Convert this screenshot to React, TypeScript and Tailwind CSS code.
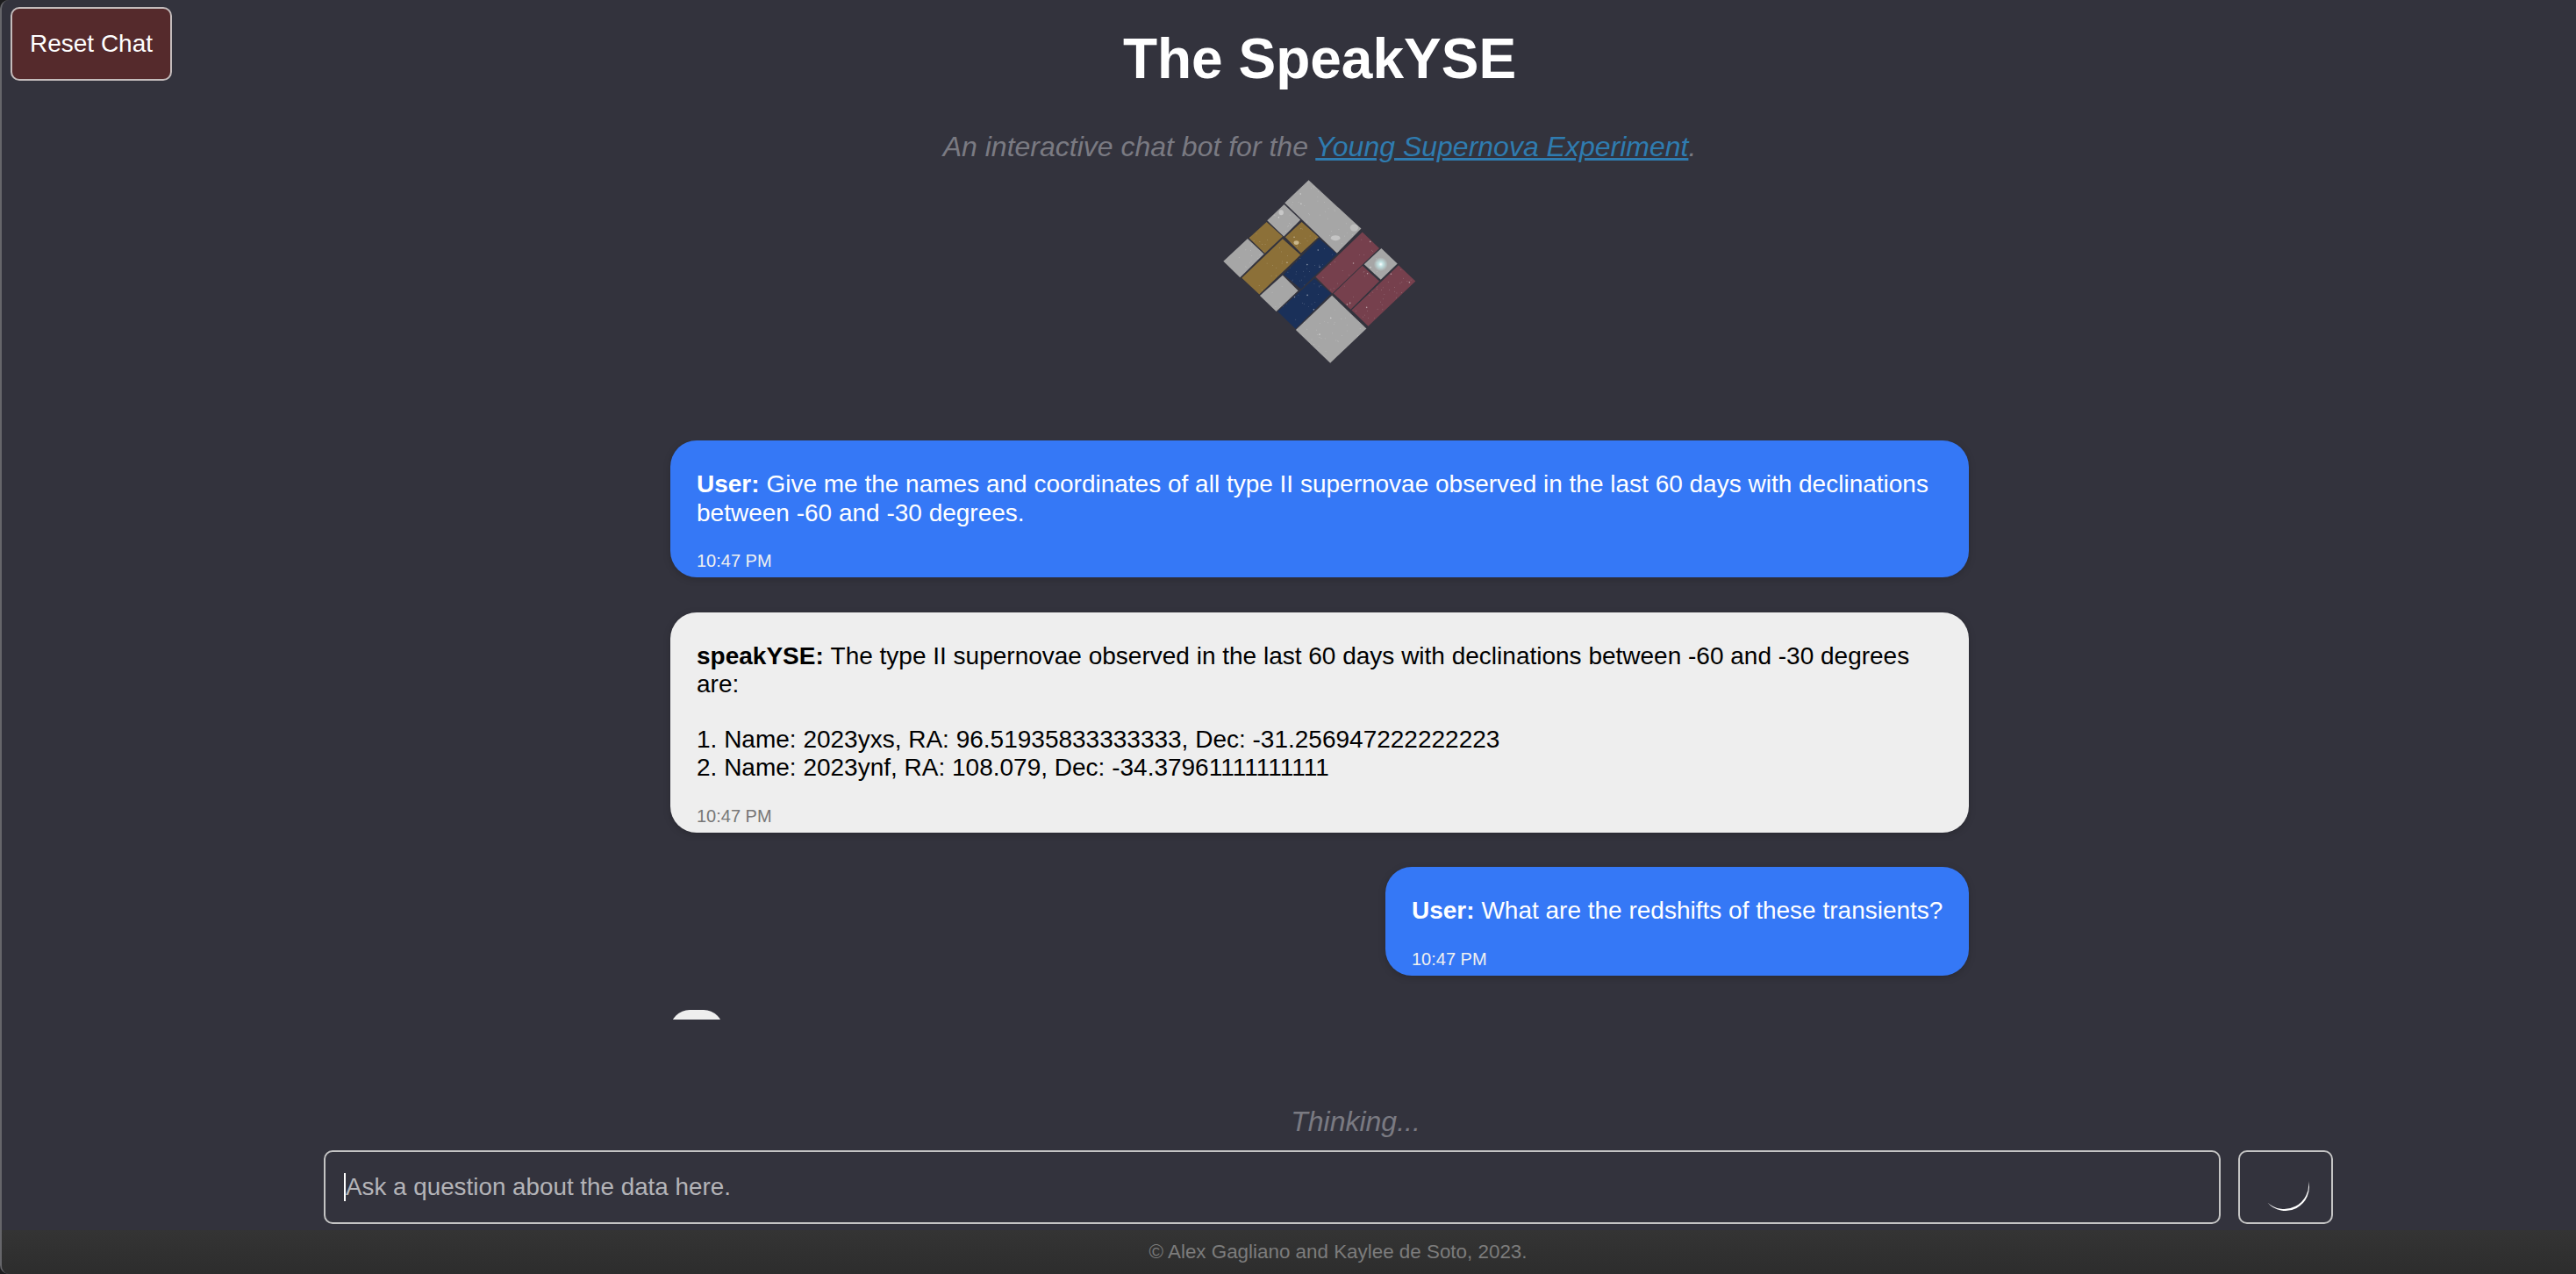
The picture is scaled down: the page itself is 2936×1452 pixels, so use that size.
const font = 'font-["Liberation_Sans",Arial,sans-serif]'

type Msg = { who: string; mine: boolean; lines: string[]; wide: boolean }

const messages: Msg[] = [
  {
    who: 'User:',
    mine: true,
    wide: true,
    lines: ['Give me the names and coordinates of all type II supernovae observed in the last 60 days with declinations between -60 and -30 degrees.'],
  },
  {
    who: 'speakYSE:',
    mine: false,
    wide: true,
    lines: [
      'The type II supernovae observed in the last 60 days with declinations between -60 and -30 degrees are:',
      '',
      '1. Name: 2023yxs, RA: 96.51935833333333, Dec: -31.256947222222223',
      '2. Name: 2023ynf, RA: 108.079, Dec: -34.37961111111111',
    ],
  },
  { who: 'User:', mine: true, wide: false, lines: ['What are the redshifts of these transients?'] },
]

// tiles of the logo, in the mosaic's own coordinates
const tiles = [
  { fill: '#a6a6a6', pts: '456,77 636,243 553,327 374,155' },
  { fill: '#a6a6a6', pts: '372,160 428,213 371,270 314,215' },
  { fill: '#8c7038', pts: '312,220 367,270 306,328 252,275' },
  { fill: '#8c7038', pts: '432,220 490,272 430,327 376,272' },
  { fill: '#a6a6a6', pts: '247,277 303,330 221,410 164,355' },
  { fill: '#8c7038', pts: '367,278 428,333 287,468 227,412' },
  { fill: '#1a3059', pts: '492,277 553,330 430,450 370,400' },
  { fill: '#a6a6a6', pts: '367,403 420,455 345,527 289,473' },
  { fill: '#1a3059', pts: '476,413 533,465 411,586 350,527' },
  { fill: '#a6a6a6', pts: '536,472 654,585 530,703 412,590' },
  { fill: '#76404d', pts: '640,255 698,310 537,465 480,408' },
  { fill: '#a6a6a6', pts: '705,310 760,363 703,418 646,365' },
  { fill: '#76404d', pts: '640,370 698,423 600,520 541,465' },
  { fill: '#76404d', pts: '764,368 822,423 660,577 603,522' },
]

const rand = (n: number) => {
  const v = Math.sin(n * 12.9898) * 43758.5453
  return v - Math.floor(v)
}

// fixed scatter of stars
const stars = Array.from({ length: 520 }, (_, i) => ({
  x: 165 + rand(i + 1) * 660,
  y: 75 + rand(i + 1000) * 630,
  r: rand(i + 2000) > 0.9 ? 2.4 : 1.1,
}))

function Logo() {
  return (
    <svg width="223" height="213" viewBox="160 70 670 640" className="block">
      <defs>
        <clipPath id="mosaic">
          {tiles.map((t, i) => (
            <polygon key={i} points={t.pts} />
          ))}
        </clipPath>
        <radialGradient id="glow">
          <stop offset="0" stopColor="#ffffff" />
          <stop offset="0.35" stopColor="#c8f0f0" stopOpacity="0.8" />
          <stop offset="1" stopColor="#c8f0f0" stopOpacity="0" />
        </radialGradient>
      </defs>
      {tiles.map((t, i) => (
        <polygon key={i} points={t.pts} fill={t.fill} />
      ))}
      <g clipPath="url(#mosaic)">
        {stars.map((s, i) => (
          <circle key={i} cx={s.x} cy={s.y} r={s.r} fill="#ffffff" opacity="0.5" />
        ))}
        <ellipse cx="548" cy="275" rx="16" ry="9" fill="#c4c4c4" />
        <ellipse cx="612" cy="240" rx="14" ry="12" fill="#bdbdbd" />
        <ellipse cx="362" cy="188" rx="8" ry="9" fill="#c8c8c8" />
        <ellipse cx="414" cy="291" rx="9" ry="7" fill="#c9b68a" />
      </g>
      <circle cx="703" cy="365" r="24" fill="url(#glow)" />
    </svg>
  )
}

function Bubble({ m }: { m: Msg }) {
  return (
    <div
      className={`shrink-0 rounded-[30px] pl-[30px] pr-[28px] pt-[34px] pb-[7px] shadow-[0_2px_8px_rgba(0,0,0,0.18)] ${m.mine ? 'self-end bg-[#3578f6] text-white' : 'self-start bg-[#eeeeee] text-black'} ${m.wide ? 'w-[1480px]' : 'w-[665px] whitespace-nowrap'}`}
    >
      <div className="text-[28px] leading-[32.5px]">
        {m.lines.map((l, i) => (
          <p key={i} className={l ? '' : 'h-[30px]'}>
            {i === 0 && <strong>{m.who} </strong>}
            {l}
          </p>
        ))}
      </div>
      <div className={`mt-[26px] text-[20px] leading-[24px] ${m.mine ? 'text-[#f0f0f0]' : 'text-[#777777]'}`}>10:47 PM</div>
    </div>
  )
}

export default function App() {
  return (
    <div className="bg-[#1c1c1e]">
      <div className={`${font} relative flex h-[1452px] flex-col overflow-hidden rounded-l-[10px] border-l-2 border-[#66666a] bg-[#33333d] text-white`}>
        <button className="absolute left-[10px] top-[8px] h-[84px] w-[184px] rounded-[10px] border-2 border-[#c4bcbc] bg-[#552a2c] text-[28px] text-white">
          Reset Chat
        </button>

        <header className="flex flex-col items-center pl-[70px]">
          <h1 className="mt-[26px] text-[64px] font-bold leading-[82px]">The SpeakYSE</h1>
          <p className="mt-[38px] text-[32px] italic leading-[42px] text-[#7a7a82]">
            An interactive chat bot for the <a className="text-[#2f7cb0] underline">Young Supernova Experiment</a>.
          </p>
          <div className="mt-[15px]">
            <Logo />
          </div>
        </header>

        <div className="pl-[70px]">
          <div className="mx-auto mt-[86px] flex h-[660px] w-[1500px] flex-col gap-[39.5px] overflow-hidden px-[10px]">
            {messages.map((m, i) => (
              <Bubble key={i} m={m} />
            ))}
            <div className="h-[60px] w-[60px] shrink-0 rounded-[22px] bg-[#eeeeee]" />
          </div>
        </div>

        <p className="mt-auto pl-[152px] text-center text-[32px] italic leading-[40px] text-[#7a7a82]">Thinking...</p>
        <div className="mt-[13px] pl-[90px]">
          <div className="mx-auto flex w-[2290px] gap-[20px]">
            <div className="flex h-[84px] flex-1 items-center rounded-[10px] border-2 border-[#c4c4c4] pl-[21px] text-[27.8px] text-[#b4b4b8]">
              <span className="h-[32px] w-[2px] bg-white" />
              Ask a question about the data here.
            </div>
            <button className="flex h-[84px] w-[108px] items-center justify-center rounded-[10px] border-2 border-[#c4c4c4]">
              <svg width="60" height="60" viewBox="0 0 60 60">
                <path d="M56 23 A27 27 0 0 1 9.3 47.4 A27.9 27.9 0 0 0 56 23 Z" fill="#ffffff" />
              </svg>
            </button>
          </div>
        </div>
        <footer className="mt-[7px] flex h-[50px] items-center justify-center bg-gradient-to-b from-[#343434] to-[#2d2d2d] pl-[112px] text-[22.4px] text-[#7c7c7c]">
          © Alex Gagliano and Kaylee de Soto, 2023.
        </footer>
      </div>
    </div>
  )
}
